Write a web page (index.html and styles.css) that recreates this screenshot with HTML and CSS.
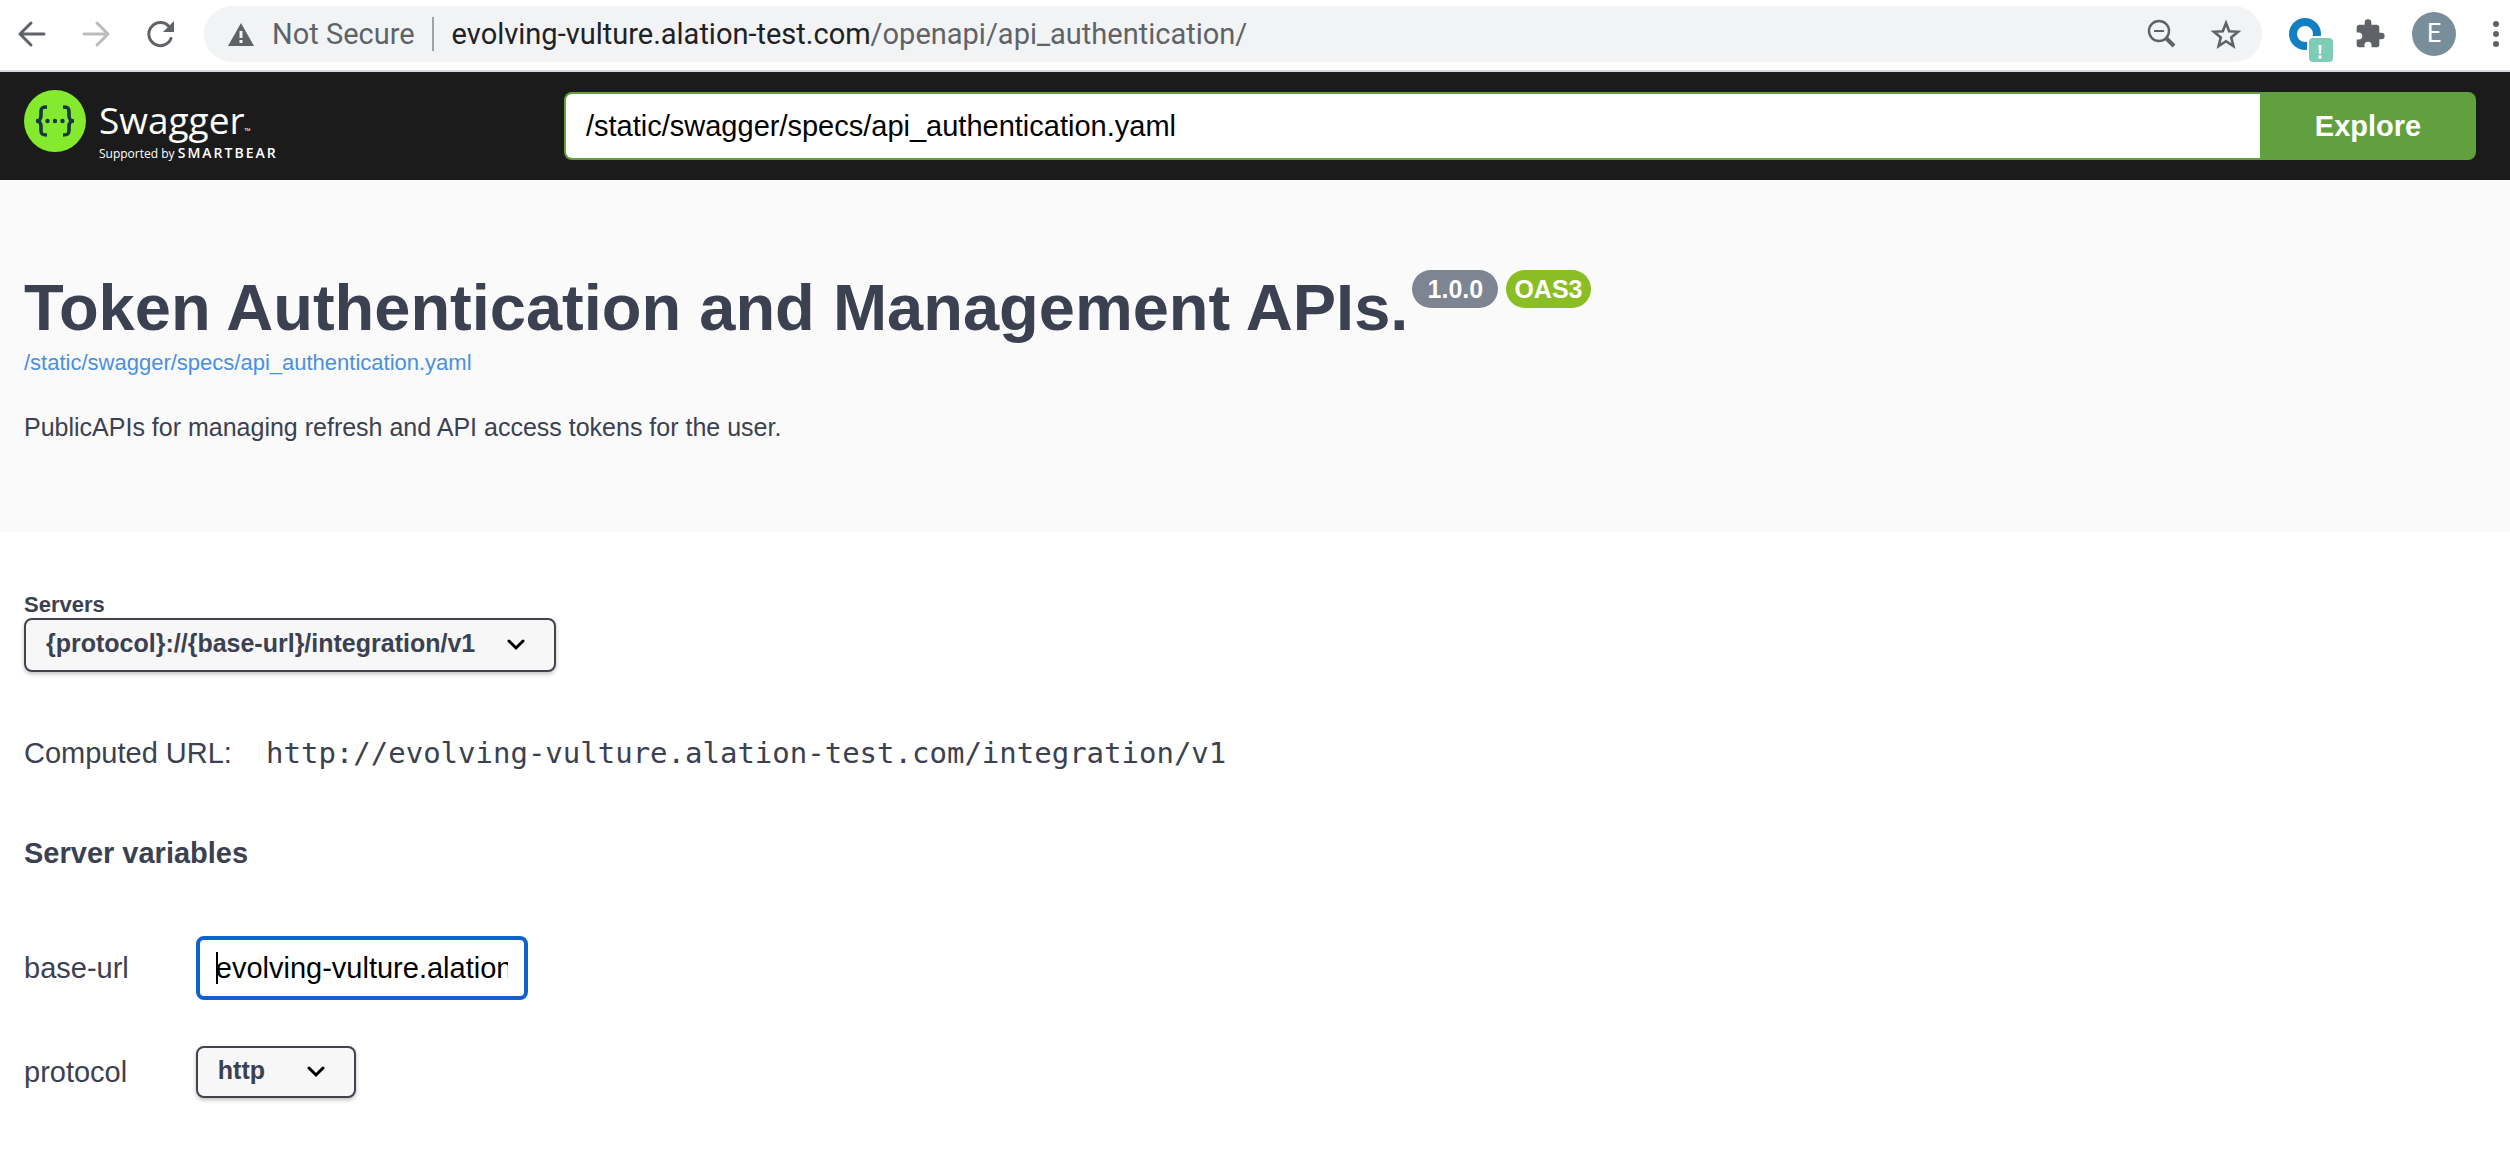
FILE: index.html
```html
<!DOCTYPE html>
<html lang="en">
<head>
<meta charset="utf-8">
<title>Token Authentication and Management APIs</title>
<link rel="stylesheet" href="styles.css">
</head>
<body>
<nav class="browser" aria-label="Browser toolbar">
  <div class="nav-buttons">
    <button class="icon-button" aria-label="Back"><svg class="icon" viewBox="0 0 32 32" fill="none" stroke="#5f6368" stroke-width="3" stroke-linecap="round" stroke-linejoin="round"><path d="M28 16H4M15 5L4 16l11 11"/></svg></button>
    <button class="icon-button" aria-label="Forward"><svg class="icon" viewBox="0 0 32 32" fill="none" stroke="#babcbe" stroke-width="3" stroke-linecap="round" stroke-linejoin="round"><path d="M4 16h24M17 5l11 11-11 11"/></svg></button>
    <button class="icon-button" aria-label="Reload"><svg class="icon" viewBox="0 0 32 32"><path d="M27 20.500a11.500 11.500 0 1 1-2-12" fill="none" stroke="#5f6368" stroke-width="3" stroke-linecap="round"/><path d="M30 3v11H19z" fill="#5f6368"/></svg></button>
  </div>
  <div class="omnibox">
    <svg class="warning" viewBox="0 0 26 23"><path d="M13 0L26 23H0z" fill="#5f6368"/><path d="M11.500 8h3v7h-3zM11.500 17h3v3h-3z" fill="#f1f3f4"/></svg>
    <span class="security">Not Secure</span>
    <span class="address"><span class="host">evolving-vulture.alation-test.com</span>/openapi/api_authentication/</span>
    <button class="icon-button" aria-label="Zoom"><svg class="icon" viewBox="0 0 32 32" fill="none" stroke="#5f6368"><circle cx="13" cy="13" r="10" stroke-width="2.400"/><path d="M8 13h10" stroke-width="2"/><path d="M20 20l8 8" stroke-width="4"/></svg></button>
    <button class="icon-button" aria-label="Bookmark"><svg class="icon" viewBox="0 0 32 32"><path d="M16 5l3.200 8.200 8.800.6-6.800 5.600 2.200 8.600-7.400-4.800L8.600 28l2.200-8.600L4 13.800l8.800-.6z" fill="none" stroke="#5f6368" stroke-width="2.600"/></svg></button>
  </div>
  <div class="extensions">
    <button class="icon-button" aria-label="Okta"><svg class="extension" viewBox="0 0 46 58"><circle cx="17" cy="29" r="12" fill="none" stroke="#137fc3" stroke-width="8"/><rect x="19" y="31" width="27" height="27" fill="#fff"/><rect x="21" y="33" width="24" height="24" rx="4" fill="#7fccb6"/><path d="M30.500 40h3l-.5 9h-2zM30.500 50.500h3v3h-3z" fill="#fff"/></svg></button>
    <button class="icon-button" aria-label="Extensions"><svg class="icon" viewBox="0 0 24 24"><path d="M20.500 11H19V7c0-1.100-.9-2-2-2h-4V3.500a2.500 2.500 0 0 0-5 0V5H4c-1.100 0-2 .9-2 2v3.800h1.500a2.700 2.700 0 0 1 0 5.400H2V20c0 1.100.9 2 2 2h3.800v-1.500a2.700 2.700 0 0 1 5.400 0V22H17c1.100 0 2-.9 2-2v-4h1.500a2.500 2.500 0 0 0 0-5z" fill="#5f6368"/></svg></button>
    <button class="avatar" aria-label="Profile">E</button>
    <button class="icon-button" aria-label="Menu"><svg class="dots" viewBox="0 0 8 28" fill="#5f6368"><circle cx="4" cy="4" r="3"/><circle cx="4" cy="14" r="3"/><circle cx="4" cy="24" r="3"/></svg></button>
  </div>
</nav>
<header class="topbar">
  <a class="brand" href="#">
    <svg class="brand-mark" viewBox="0 0 62 62"><circle cx="31" cy="31" r="31" fill="#85ea2d"/><g fill="none" stroke="#173647" stroke-width="3.600"><path d="M23 17c-5 0-6 1-6 5v3c0 4-1 6-5 6 4 0 5 2 5 6v3c0 4 1 5 6 5"/><path d="M39 17c5 0 6 1 6 5v3c0 4 1 6 5 6-4 0-5 2-5 6v3c0 4-1 5-6 5"/></g><g fill="#173647"><circle cx="23.500" cy="31" r="2.200"/><circle cx="31" cy="31" r="2.200"/><circle cx="38.500" cy="31" r="2.200"/></g></svg>
    <span class="brand-text"><span class="brand-name">Swagger<span class="trademark">™</span></span><span class="brand-support">Supported by <b class="smartbear">SMARTBEAR</b></span></span>
  </a>
  <form class="spec-form">
    <input class="spec-input" type="text" aria-label="Specification URL" value="/static/swagger/specs/api_authentication.yaml">
    <button class="explore" type="button">Explore</button>
  </form>
</header>
<main>
  <section class="info">
    <div class="heading"><h1 class="title">Token Authentication and Management APIs.</h1><span class="badge">1.0.0</span><span class="badge badge-oas">OAS3</span></div>
    <a class="spec-link" href="#">/static/swagger/specs/api_authentication.yaml</a>
    <p class="description">PublicAPIs for managing refresh and API access tokens for the user.</p>
  </section>
  <section class="servers">
    <label class="servers-label" for="server">Servers</label>
    <select class="select" id="server"><option>{protocol}://{base-url}/integration/v1</option></select>
    <p class="computed">Computed URL: <code class="computed-url">http://evolving-vulture.alation-test.com/integration/v1</code></p>
    <h2 class="variables-title">Server variables</h2>
    <div class="variables">
      <label for="base-url">base-url</label>
      <div class="variable-field"><input class="variable-input" id="base-url" type="text" value="evolving-vulture.alation-test.com"><span class="caret"></span></div>
      <label for="protocol">protocol</label>
      <select class="select select-protocol" id="protocol"><option>http</option></select>
    </div>
  </section>
</main>
</body>
</html>
```
FILE: styles.css
```css
* { box-sizing: border-box; }
body { margin: 0; background: #fff; color: #3b4151; font-family: "Liberation Sans", Arial, sans-serif; font-size: 29px; line-height: 34px; }
button, input, select { font: inherit; }
button { border: 0; padding: 0; cursor: pointer; }
h1, h2, p { margin: 0; }

.browser { display: flex; align-items: center; height: 72px; padding: 0 10px 2px 16px; border-bottom: 2px solid #d5d7dc; font-family: Roboto, sans-serif; }
.nav-buttons { display: flex; gap: 32px; }
.icon-button { display: flex; background: none; }
.icon { width: 32px; height: 32px; }
.omnibox { flex: 1; display: flex; align-items: center; height: 56px; margin-left: 28px; padding: 0 20px 0 24px; border-radius: 28px; background: #f1f3f4; color: #5f6368; }
.warning { width: 26px; height: 23px; margin-right: 18px; }
.security { padding-right: 17px; border-right: 2px solid #9fa1a4; }
.address { flex: 1; padding-left: 18px; }
.host { color: #202124; }
.omnibox .icon-button + .icon-button { margin-left: 32px; }
.extensions { display: flex; align-items: center; margin-left: 26px; }
.extension { width: 46px; height: 58px; }
.extensions .icon-button + .icon-button { margin-left: 20px; }
.avatar { width: 44px; height: 44px; margin: 0 36px 0 26px; border-radius: 50%; background: #788f9b; color: #fff; font-size: 25px; }
.dots { width: 8px; height: 28px; }

.topbar { display: flex; align-items: center; height: 108px; padding: 0 34px 0 24px; background: #1b1b1b; }
.brand { display: flex; align-items: flex-start; gap: 13px; width: 540px; color: #fff; text-decoration: none; font-family: "Open Sans", sans-serif; }
.brand-mark { width: 62px; height: 62px; }
.brand-text { display: flex; flex-direction: column; padding-top: 6px; }
.brand-name { font-size: 37px; line-height: 48px; }
.trademark { font-size: 8px; line-height: 8px; }
.brand-support { font-size: 12px; line-height: 18px; }
.smartbear { font-size: 14px; font-weight: 600; letter-spacing: 2px; }
.spec-form { flex: 1; display: flex; height: 68px; }
.spec-input { flex: 1; min-width: 0; padding: 0 20px; border: 2px solid #62a03f; border-right: 0; border-radius: 8px 0 0 8px; background: #fff; color: #000; }
.explore { width: 216px; border-radius: 0 8px 8px 0; background: #62a03f; color: #fff; font-weight: bold; }

.info { padding: 90px 24px 88px; background: #fafafa; }
.heading { display: flex; align-items: flex-start; gap: 4px; }
.title { font-size: 65px; line-height: 76px; }
.badge { min-width: 86px; padding: 0 8px; border-radius: 19px; background: #7d8492; color: #fff; font-size: 25px; font-weight: bold; line-height: 38px; text-align: center; }
.badge-oas { min-width: 84px; margin-left: 4px; background: #8bbe24; }
.spec-link { display: block; margin-top: 4px; color: #4990e2; text-decoration: none; font-size: 22px; line-height: 26px; }
.description { margin-top: 34px; font-size: 25px; }

.servers { padding: 60px 24px; }
.servers-label { display: block; font-size: 22px; font-weight: bold; line-height: 26px; }
.select { display: block; width: 532px; height: 54px; padding: 0 60px 4px 20px; appearance: none; border: 2px solid #41444e; border-radius: 8px; color: #3b4151; font-size: 25px; font-weight: bold; box-shadow: 0 2px 4px rgba(0, 0, 0, .25); background: #f7f7f7 url("data:image/svg+xml,%3Csvg xmlns='http://www.w3.org/2000/svg' viewBox='0 0 20 12'%3E%3Cpath d='M3 2l7 7 7-7' fill='none' stroke='%23000' stroke-width='3' stroke-linecap='round'/%3E%3C/svg%3E") no-repeat right 28px center / 20px 12px; }
.computed { margin-top: 64px; }
.computed-url { margin-left: 26px; font-family: "DejaVu Sans Mono", monospace; }
.variables-title { margin-top: 66px; font-size: 29px; }
.variables { display: grid; grid-template-columns: auto 1fr; align-items: center; justify-items: start; gap: 46px 67px; margin-top: 66px; }
.variable-field { position: relative; display: flex; }
.variable-input { width: 332px; height: 64px; padding: 0 16px; border: 4px solid #0f62ce; border-radius: 8px; outline: 0; background: #fff; color: #000; }
.caret { position: absolute; top: 16px; left: 20px; width: 2px; height: 32px; background: #000; }
.select-protocol { width: 160px; height: 52px; }
```
